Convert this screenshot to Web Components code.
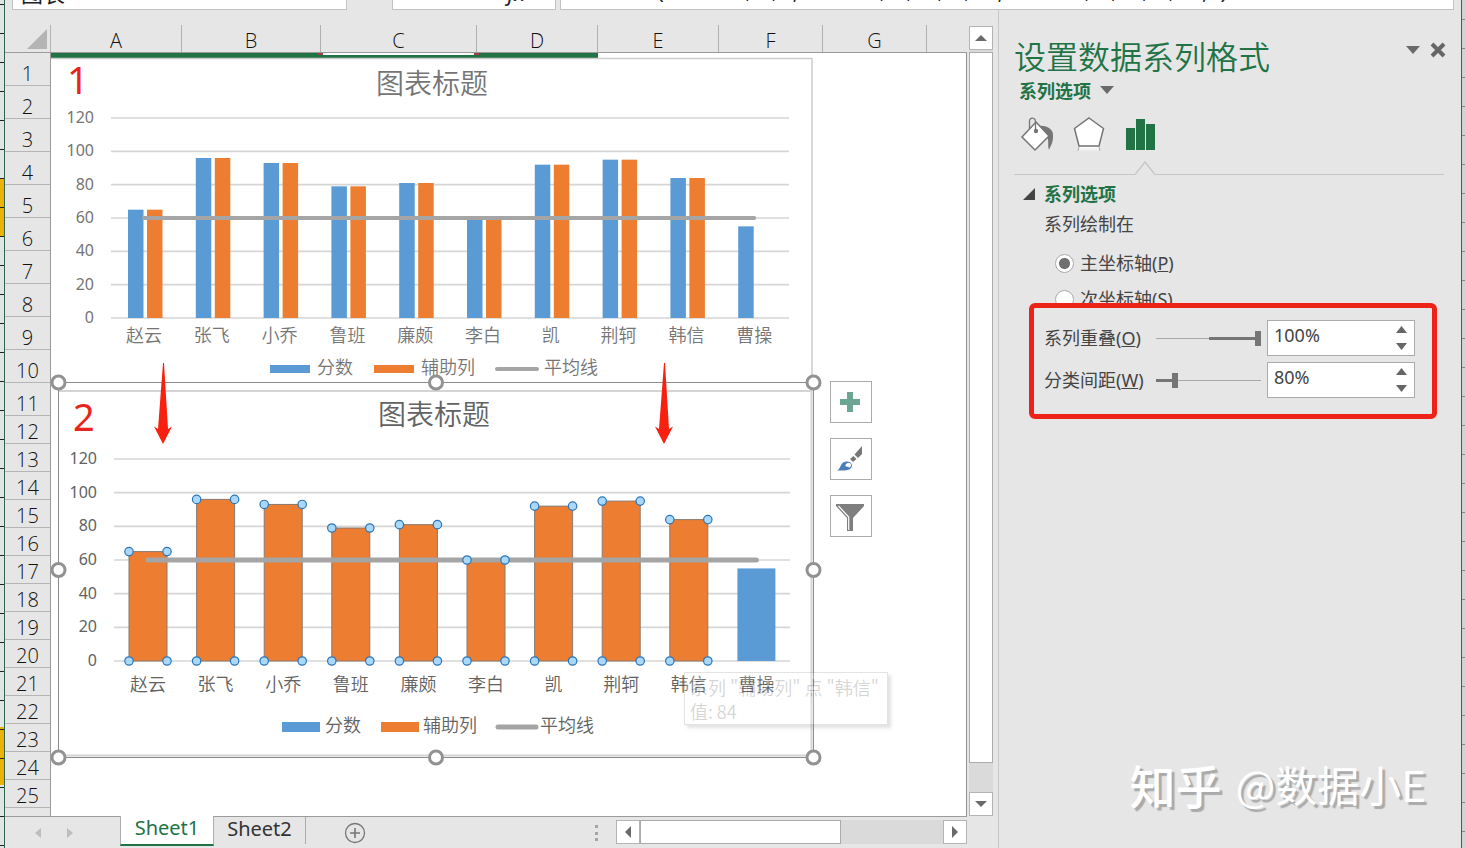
<!DOCTYPE html>
<html lang="zh-CN">
<head>
<meta charset="utf-8">
<title>Sheet1</title>
<style>
html, body { margin: 0; height: 100%; }
body { font-family: "Noto Sans", "Noto Sans CJK SC", sans-serif; color: #444; background: #e6e6e6; overflow: hidden; }
</style>
</head>
<body>
<excel-app></excel-app>
<script>
const define = (name, html, setup) => {
  const tpl = document.createElement('template');
  tpl.innerHTML = html;
  customElements.define(name, class extends HTMLElement {
    connectedCallback() {
      if (this.shadowRoot) return;
      const root = this.attachShadow({ mode: 'open' });
      root.append(tpl.content.cloneNode(true));
      if (setup) setup(this, root);
    }
  });
};

/* ---------- formula bar ---------- */
define('formula-bar', `
<style>
:host { display: flex; height: 10px; overflow: hidden; align-items: flex-end; padding: 0 7px; color: #222; }
input, .fx { box-sizing: border-box; height: 34px; border: 1px solid #c3c3c3; background: #fff; font: 22px "Noto Sans", "Noto Sans CJK SC", sans-serif; color: inherit; margin: 0; padding: 0 8px 6px; border-radius: 0; flex: none; }
.name { width: 335px; margin-right: 45px; padding-bottom: 3px; }
.fx { width: 164px; margin-right: 4px; text-align: right; padding-right: 30px; font-style: italic; padding-bottom: 10px; }
.formula { flex: 1; min-width: 0; padding-left: 14px; }
</style>
<input class="name" aria-label="名称框" value="图表">
<button class="fx" type="button">fx</button>
<input class="formula" aria-label="编辑栏" value="=SERIES(Sheet1!$C$1,Sheet1!$A$2:$A$11,Sheet1!$C$2:$C$11,2)">
`);

/* ---------- column and row headings ---------- */
define('column-headings', `
<style>
:host { display: flex; box-sizing: border-box; height: 43px; padding-top: 15px; border-bottom: 1px solid #9b9b9b; font: 350 20px "Open Sans", "Noto Sans", sans-serif; color: #111; }
.corner { width: 46px; box-sizing: border-box; border-right: 1px solid #b5b5b5; flex: none; }
.corner svg { display: block; margin: 4px 0 0 22px; }
.col { box-sizing: border-box; border-right: 1px solid #b0b0b0; text-align: center; line-height: 32px; flex: none; }
</style>
<div class="corner"><svg width="20" height="20"><path d="M20 0V20H0Z" fill="#b4b4b4"/></svg></div>
`, (el, root) => {
  [['A', 131], ['B', 139], ['C', 156], ['D', 121], ['E', 121], ['F', 104], ['G', 104]].forEach(([t, w]) => {
    const d = document.createElement('div');
    d.className = 'col'; d.style.width = w + 'px'; d.textContent = t;
    root.append(d);
  });
});

define('row-headings', `
<style>
:host { display: block; box-sizing: border-box; width: 46px; border-right: 1px solid #9b9b9b; font: 350 20px "Open Sans", "Noto Sans", sans-serif; color: #111; overflow: hidden; }
div { box-sizing: border-box; height: 28px; display: flex; align-items: flex-end; justify-content: center; line-height: 22px; border-bottom: 1px solid #b5b5b5; }
.tall { height: 33px; }
</style>`, (el, root) => {
  for (let i = 1; i <= 25; i++) {
    const d = document.createElement('div');
    if (i < 12) d.className = 'tall';
    d.textContent = i;
    root.append(d);
  }
});

/* ---------- charts ---------- */
const names = ['赵云', '张飞', '小乔', '鲁班', '廉颇', '李白', '凯', '荆轲', '韩信', '曹操'];
const scores = [65, 96, 93, 79, 81, 60, 92, 95, 84, 55];
const layouts = {
  side: { w: 762, h: 330, left: 60, right: 738, top: 60, base: 260, c0: 93, step: 67.8, title: [381, 26, 28], labelX: 43, label: 16, cat: 18, catY: 277, legendY: 309,
          legend: [219, 266, 323, 370, 446, 493], swatch: 40, ink: '#757575', line: 4 },
  overlap: { w: 755, h: 375, left: 56, right: 732, top: 77, base: 279, c0: 90, step: 67.6, title: [376, 33, 28], labelX: 39, label: 16, cat: 18, catY: 302, legendY: 343,
          legend: [224, 267, 323, 365, 440, 482], swatch: 38, ink: '#626262', line: 5 }
};
define('score-chart', `
<style>
:host { display: block; }
svg { display: block; overflow: visible; font-family: "Noto Sans", "Noto Sans CJK SC", sans-serif; }
.cjk { font-family: "Noto Sans CJK SC", sans-serif; font-weight: 350; }
</style>`, (el, root) => {
  const kind = el.getAttribute('kind'), L = layouts[kind], over = kind === 'overlap';
  const y = v => L.base - v * (L.base - L.top) / 120;
  const text = (x, cy, size, t, anchor, cjk) =>
    `<text x="${x}" y="${Math.round(cy + size * .37)}" font-size="${size}" text-anchor="${anchor}" fill="${L.ink}"${cjk ? ' class="cjk"' : ''}>${t}</text>`;
  let s = over
    ? `<rect width="${L.w}" height="${L.h}" fill="#fff"/><path d="M0 9H753.500V373.500H0" fill="none" stroke="#d4d4d4" stroke-width="2"/><path d="M.5 .5H755.500V375.500H.5Z" fill="none" stroke="#8c8c8c"/>`
    : `<path d="M0 .5H761V${L.h}" fill="#fff" stroke="#cdcdcd" stroke-width="1.5"/>`;
  s += text(L.title[0], L.title[1], L.title[2], '图表标题', 'middle', true);
  for (let v = 0; v <= 120; v += 20) {
    s += `<path d="M${L.left} ${y(v)}H${L.right}" stroke="#d6d6d6" stroke-width="1.7"/>` + text(L.labelX, y(v) - 1, L.label, v, 'end');
  }
  let dots = '';
  scores.forEach((v, i) => {
    const c = L.c0 + i * L.step, t = y(v), last = i === 9;
    if (over) {
      s += `<rect x="${c - 19}" y="${t}" width="38" height="${L.base - t}" fill="${last ? '#5b9bd5' : '#ed7d31'}"${last ? '' : ' stroke="#8a7a70"'}/>`;
      if (!last) [[-19, t], [19, t], [-19, L.base], [19, L.base]].forEach(([dx, yy]) =>
        dots += `<circle cx="${c + dx}" cy="${yy}" r="4.2" fill="#a8d8fb" stroke="#2e75b6" stroke-width="1.2"/>`);
    } else {
      s += `<rect x="${c - 16}" y="${t}" width="15.5" height="${L.base - t}" fill="#5b9bd5"/>`;
      if (!last) s += `<rect x="${c + 3}" y="${t}" width="15.5" height="${L.base - t}" fill="#ed7d31"/>`;
    }
    s += text(c, L.catY, L.cat, names[i], 'middle', true);
  });
  s += `<path d="M${L.c0} ${y(60)}H${L.c0 + 9 * L.step}" stroke="#a5a5a5" stroke-width="${L.line}" stroke-linecap="round"/>` + dots;
  const g = L.legend, ly = L.legendY, h = over ? 10 : 8;
  s += `<rect x="${g[0]}" y="${ly - h / 2 + 2}" width="${L.swatch}" height="${h}" fill="#5b9bd5"/>` + text(g[1], ly, 18, '分数', 'start', true)
     + `<rect x="${g[2]}" y="${ly - h / 2 + 2}" width="${L.swatch}" height="${h}" fill="#ed7d31"/>` + text(g[3], ly, 18, '辅助列', 'start', true)
     + `<path d="M${g[4]} ${ly + 2}h${L.swatch}" stroke="#a5a5a5" stroke-width="${L.line}" stroke-linecap="round"/>` + text(g[5], ly, 18, '平均线', 'start', true);
  if (over) {
    const H = L.h, W = L.w;
    [[0, 0], [W / 2, 0], [W, 0], [0, H / 2], [W, H / 2], [0, H], [W / 2, H], [W, H]].forEach(([x, yy]) =>
      s += `<circle cx="${x + .5}" cy="${yy + .5}" r="6.5" fill="#fff" stroke="#929292" stroke-width="3"/>`);
  }
  root.innerHTML += `<svg width="${L.w}" height="${L.h}" role="img">${s}</svg>`;
});

define('red-arrow', `
<style>:host { display: block; } svg { display: block; }</style>
<svg width="20" height="84" viewBox="0 0 20 84"><path d="M10 1H11L15 67L19 64.500L10 82L1 64.500L5 67Z" fill="#f8200f"/></svg>`);

define('chart-buttons', `
<style>
:host { display: flex; flex-direction: column; gap: 15px; }
button { width: 42px; height: 42px; box-sizing: border-box; padding: 0; margin: 0; border: 1px solid #ababab; background: #fff; display: grid; place-items: center; }
svg { display: block; }
</style>
<button type="button" aria-label="图表元素"><svg width="40" height="40"><path d="M16 10h6v7h7v6h-7v7h-6v-7H9v-6h7Z" fill="#6ca592"/></svg></button>
<button type="button" aria-label="图表样式"><svg width="40" height="40">
<path d="M31 7V15L27 19L23.500 15.500Z" fill="#777"/><path d="M22.500 17L25.500 20L22 23L19 20Z" fill="#777"/>
<path d="M6 31.500C10 30 9 23 15 22.500C20 22 22.500 26 20 29C18 32 12 31.500 6 31.500Z" fill="#4a7ebb"/><path d="M14.500 26C16 23 20.500 23 20 26.500C19.500 29 17.500 29 17 27.500C15.500 28 14 27.500 14.500 26Z" fill="#fff"/></svg></button>
<button type="button" aria-label="图表筛选器"><svg width="40" height="40">
<path d="M5 8H33V10L22 22V35H16V22L5 10Z" fill="#7f7f7f"/><path d="M7.500 10L17.700 21V34" fill="none" stroke="#fff" stroke-width="1.200"/></svg></button>
`);

define('point-tip', `<style>
:host { display: block; box-sizing: border-box; padding: 2px 5px; border: 1px solid #777; background: #fff; box-shadow: 3px 3px 3px #777; font: 350 18px/24px "Noto Sans CJK SC", sans-serif; color: #333; opacity: .2; white-space: pre; }
</style><slot></slot>`);

/* ---------- sheet canvas ---------- */
define('sheet-canvas', `
<style>
:host { display: block; position: relative; flex: 1; min-width: 0; background: #fff; overflow: hidden; border-right: 1px solid #8f8f8f; box-sizing: border-box; }
:host > * { position: absolute; }
.band, .range, .n, red-arrow, score-chart, chart-buttons, point-tip { position: absolute; }
.band { left: 0; top: 0; width: 547px; height: 5px; background: #217346; }
.range { left: 267px; top: 0; width: 161px; height: 2px; box-sizing: border-box; border: solid #a63c48; border-width: 0 5px; background: #fff; }
.one { left: 0; top: 5px; }
.two { left: 7px; top: 329px; }
.n { color: #e8241c; font-size: 38px; line-height: 40px; }
.n1 { left: 16px; top: 6px; } .n2 { left: 22px; top: 343px; }
.a1 { left: 102px; top: 309px; } .a2 { left: 603px; top: 309px; }
chart-buttons { left: 779px; top: 328px; }
point-tip { left: 633px; top: 619px; width: 204px; height: 53px; }
</style>
<div class="band"></div><div class="range"></div>
<score-chart class="one" kind="side"></score-chart>
<score-chart class="two" kind="overlap"></score-chart>
<div class="n n1">1</div><div class="n n2">2</div>
<red-arrow class="a1"></red-arrow><red-arrow class="a2"></red-arrow>
<chart-buttons></chart-buttons>
<point-tip>系列 "辅助列" 点 "韩信"
值: 84</point-tip>
`);

/* ---------- scroll bars ---------- */
define('scroll-bar', `
<style>
:host { display: flex; background: #dadada; }
:host([vertical]) { flex-direction: column; }
button { flex: none; box-sizing: border-box; width: 24px; height: 24px; padding: 0; margin: 0; border: 1px solid #b4b4b4; background: #fff; display: grid; place-items: center; }
.thumb { box-sizing: border-box; border: 1px solid #ababab; background: #fff; flex: 200; }
.rest { flex: 102; }
:host([vertical]) .thumb { margin-top: 2px; flex: 712; }
:host([vertical]) .rest { flex: 29; }
:host([vertical]) svg { transform: rotate(90deg); }
</style>
<button type="button" aria-label="后退"><svg width="12" height="12"><path d="M9 0V12L3 6Z" fill="#6a6a6a"/></svg></button>
<div class="thumb"></div><div class="rest"></div>
<button type="button" aria-label="前进"><svg width="12" height="12"><path d="M3 0V12L9 6Z" fill="#6a6a6a"/></svg></button>
`);

/* ---------- sheet tabs ---------- */
define('sheet-tabs', `
<style>
:host { display: flex; box-sizing: border-box; height: 32px; border-top: 1px solid #9b9b9b; font-size: 20px; }
button { font: inherit; color: #333; background: none; border: 0; padding: 0; margin: 0; flex: none; }
.nav { width: 115px; display: flex; align-items: center; gap: 26px; padding-left: 30px; box-sizing: border-box; flex: none; }
.nav button { display: flex; }
.tab { height: 30px; line-height: 24px; padding-bottom: 4px; display: block; }
.on { background: #fff; color: #217346; width: 94px; box-sizing: border-box; border: solid #ababab; border-width: 0 1px; border-bottom: 2px solid #217346; margin-top: -1px; height: 30px; }
.off { width: 92px; border-right: 1px solid #aaa; height: 27px; padding: 0 0 4px; }
.add { margin: 5px 0 0 38px; height: 22px; }
.grip { margin-left: auto; width: 4px; height: 16px; margin-top: 8px; border-left: 3px dotted #a5a5a5; box-sizing: border-box; }
scroll-bar { width: 351px; height: 24px; margin: 3px 0 0 17px; flex: none; }
</style>
<div class="nav">
<button type="button" aria-label="上一个"><svg width="6" height="10"><path d="M6 0V10L0 5Z" fill="#bdbdbd"/></svg></button>
<button type="button" aria-label="下一个"><svg width="6" height="10"><path d="M0 0V10L6 5Z" fill="#bdbdbd"/></svg></button>
</div>
<button type="button" class="tab on">Sheet1</button>
<button type="button" class="tab off">Sheet2</button>
<button type="button" class="add" aria-label="新工作表"><svg width="22" height="22"><g fill="none" stroke="#777"><circle cx="11" cy="11" r="9.500" stroke-width="1.300"/><path d="M11 6v10M6 11h10" stroke-width="1.600"/></g></svg></button>
<div class="grip"></div>
<scroll-bar></scroll-bar>
`);

/* ---------- format pane ---------- */
define('radio-option', `
<style>
:host { display: block; }
label { display: flex; align-items: center; gap: 6px; height: 36px; font-size: 18px; }
span { padding-bottom: 2px; }
input { appearance: none; box-sizing: border-box; width: 19px; height: 19px; margin: 0; border: 1px solid #ababab; border-radius: 50%; background: #fff; }
input:checked { background: radial-gradient(circle, #6f6f6f 0 5px, #fff 6px); }
</style>
<label><input type="radio" name="axis"><span><slot></slot></span></label>`,
(el, root) => { root.querySelector('input').checked = el.hasAttribute('checked'); });

define('slider-field', `
<style>
:host { display: flex; align-items: center; font-size: 18px; }
label { width: 112px; flex: none; white-space: nowrap; padding-bottom: 2px; }
.range { appearance: none; flex: 1; min-width: 40px; max-width: 105px; height: 18px; margin: 0 6px 0 0; background:
  linear-gradient(#757575, #757575) var(--at) 50% / var(--fill) 3px no-repeat,
  linear-gradient(#a8a8a8, #a8a8a8) 0 50% / 100% 1px no-repeat; }
.range::-webkit-slider-thumb { appearance: none; width: 6px; height: 15px; background: #757575; border-radius: 0; }
.spin { display: flex; box-sizing: border-box; width: 148px; height: 36px; border: 1px solid #ababab; background: #fff; flex: none; }
.spin input { flex: 1; min-width: 0; border: 0; padding: 0 0 7px 6px; margin: 0; font: inherit; color: #444; background: none; }
.steps { display: flex; flex-direction: column; justify-content: center; gap: 10px; padding-right: 7px; }
button { display: block; border: 0; padding: 0; margin: 0; background: none; height: 7px; line-height: 0; }
</style>
<label for="v"><slot></slot></label>
<input class="range" type="range" aria-label="滑块">
<div class="spin"><input id="v" type="text"><div class="steps">
<button type="button" aria-label="增加"><svg width="11" height="7"><path d="M0 7H11L5.500 0Z" fill="#666"/></svg></button>
<button type="button" aria-label="减少"><svg width="11" height="7"><path d="M0 0H11L5.500 7Z" fill="#666"/></svg></button>
</div></div>`, (el, root) => {
  const r = root.querySelector('.range');
  r.min = el.getAttribute('min'); r.max = el.getAttribute('max'); r.value = el.getAttribute('value');
  root.querySelector('#v').value = el.getAttribute('value') + '%';
});

define('format-pane', `
<style>
:host { display: flex; flex-direction: column; position: relative; box-sizing: border-box; width: 463px; flex: none; border-left: 1px solid #c6c6c6; padding-top: 25px; font-size: 18px; font-family: "Noto Sans", "Noto Sans CJK SC", sans-serif; }
button { border: 0; padding: 0; margin: 0; background: none; font: inherit; color: inherit; display: flex; align-items: center; }
header { display: flex; padding: 0 15px; height: 41px; }
h1 { margin: 0; flex: 1; font: 350 32px/40px "Noto Sans CJK SC", sans-serif; color: #217346; }
.tools { display: flex; gap: 10px; height: 30px; align-items: center; }
.scope { color: #217346; font-weight: 700; height: 28px; margin-left: 20px; gap: 9px; align-self: flex-start; }
.cats { display: flex; margin: 12px 0 0 21px; height: 36px; gap: 16px; }
.rule { display: flex; margin: 9px 17px 0 15px; height: 14px; }
.rule i { box-sizing: border-box; border-bottom: 1px solid #c6c6c6; flex: 1; }
.rule i:first-child { flex: none; width: 121px; }
.rule svg { display: block; }
h2 { margin: 4px 0 0 24px; font-size: 18px; line-height: 30px; color: #217346; display: flex; align-items: center; gap: 9px; }
p { margin: 0 0 0 45px; line-height: 30px; }
.axes { margin: 6px 0 0 56px; height: 58px; overflow: hidden; }
.box { box-sizing: border-box; margin: 0 24px 0 30px; height: 116px; border: 5px solid #ed2318; border-radius: 6px; padding: 12px 10px; display: flex; flex-direction: column; gap: 6px; }
.mark { position: absolute; right: 35px; bottom: 36px; display: flex; align-items: center; gap: 14px; color: #fff; font: 400 42px/56px "Noto Sans CJK SC", sans-serif; text-shadow: 3px 3px 1px #aaa; }
.mark b { font-size: 46px; font-weight: 500; }
</style>
<header><h1>设置数据系列格式</h1><div class="tools">
<button type="button" aria-label="选项"><svg width="14" height="8"><path d="M0 0H14L7 8Z" fill="#6a6a6a"/></svg></button>
<button type="button" aria-label="关闭"><svg width="16" height="16"><path d="M2 2L14 14M14 2L2 14" stroke="#666" stroke-width="4"/></svg></button></div></header>
<button type="button" class="scope">系列选项<svg width="14" height="8"><path d="M0 0H14L7 8Z" fill="#6a6a6a"/></svg></button>
<div class="cats">
<button type="button" aria-label="填充与线条"><svg width="37" height="36">
<path d="M18 10C27 9 34 13 33 21C33 27 30 31 29 34C27 28 30 24 26 20Z" fill="#757575"/>
<path d="M16 6L29 20L15 34L2 21Z" fill="#fff" stroke="#757575" stroke-width="1.500"/>
<path d="M9.500 13V5C9.500 1 15.500 1 15.500 6V14" fill="none" stroke="#757575" stroke-width="1.300"/><circle cx="16" cy="15" r="2.200" fill="#757575"/></svg></button>
<button type="button" aria-label="效果"><svg width="32" height="36">
<defs><linearGradient id="g" x2="0" y2="1"><stop stop-color="#fff"/><stop offset="1" stop-color="#fff" stop-opacity="0"/></linearGradient></defs>
<path d="M6 31H26L28 36H4Z" fill="url(#g)"/><path d="M6 31L5 35M26 31L27 35" stroke="#aaa"/>
<path d="M16 2L30.500 12.500L26 30H6L1.500 12.500Z" fill="#fff" stroke="#757575" stroke-width="1.500"/></svg></button>
<button type="button" aria-label="系列选项"><svg width="40" height="36"><path d="M5 12h9v22H5ZM15 3h9v31h-9ZM25 8h9v26h-9Z" fill="#217346"/></svg></button>
</div>
<div class="rule"><i></i><svg width="20" height="14"><path d="M0 13.500L10 1L20 13.500" fill="none" stroke="#c6c6c6" stroke-width="1.300"/></svg><i></i></div>
<h2><svg width="12" height="12"><path d="M12 0V12H0Z" fill="#444"/></svg>系列选项</h2>
<p>系列绘制在</p>
<div class="axes" role="radiogroup"><radio-option checked>主坐标轴(<u>P</u>)</radio-option><radio-option>次坐标轴(<u>S</u>)</radio-option></div>
<div class="box">
<slider-field min="-100" max="100" value="100" style="--at:100%;--fill:50%">系列重叠(<u>O</u>)</slider-field>
<slider-field min="0" max="500" value="80" style="--at:0%;--fill:16%">分类间距(<u>W</u>)</slider-field>
</div>
<div class="mark"><b>知乎</b><span>@数据小E</span></div>
`);

/* ---------- window ---------- */
define('excel-app', `
<style>
:host { display: flex; height: 100vh; min-height: 600px; overflow: hidden; }
.behind { flex: none; width: 4px; }
.left { background: repeating-linear-gradient(transparent 0 4px, #222 4px 5px, transparent 5px 29px),
  linear-gradient(#dde6e2 179px, #eab308 179px 237px, #dde6e2 237px 727px, #eab308 727px 785px, #dde6e2 785px); }
.right { width: 3px; background: repeating-linear-gradient(transparent 0 19px, #888 19px 20px, transparent 20px 29px), #cfd4d2; }
main { flex: 1; min-width: 0; display: flex; flex-direction: column; border: solid #33654f; border-width: 0 1px; background: #e6e6e6; }
.work { flex: 1; min-height: 0; display: flex; }
.book { flex: 1; min-width: 0; display: flex; flex-direction: column; }
.top { flex: 1; min-height: 0; display: flex; }
.sheet { flex: 1; min-width: 0; display: flex; flex-direction: column; }
.body { flex: 1; min-height: 0; display: flex; }
.vert { width: 24px; margin: 16px 5px 0 2px; flex: none; }
.tabs { margin-right: 31px; flex: none; }
</style>
<div class="behind left"></div>
<main>
<formula-bar></formula-bar>
<div class="work">
<div class="book">
<div class="top">
<div class="sheet"><column-headings></column-headings><div class="body"><row-headings></row-headings><sheet-canvas></sheet-canvas></div></div>
<scroll-bar class="vert" vertical></scroll-bar>
</div>
<sheet-tabs class="tabs"></sheet-tabs>
</div>
<format-pane></format-pane>
</div>
</main>
<div class="behind right"></div>
`);
</script>
</body>
</html>
